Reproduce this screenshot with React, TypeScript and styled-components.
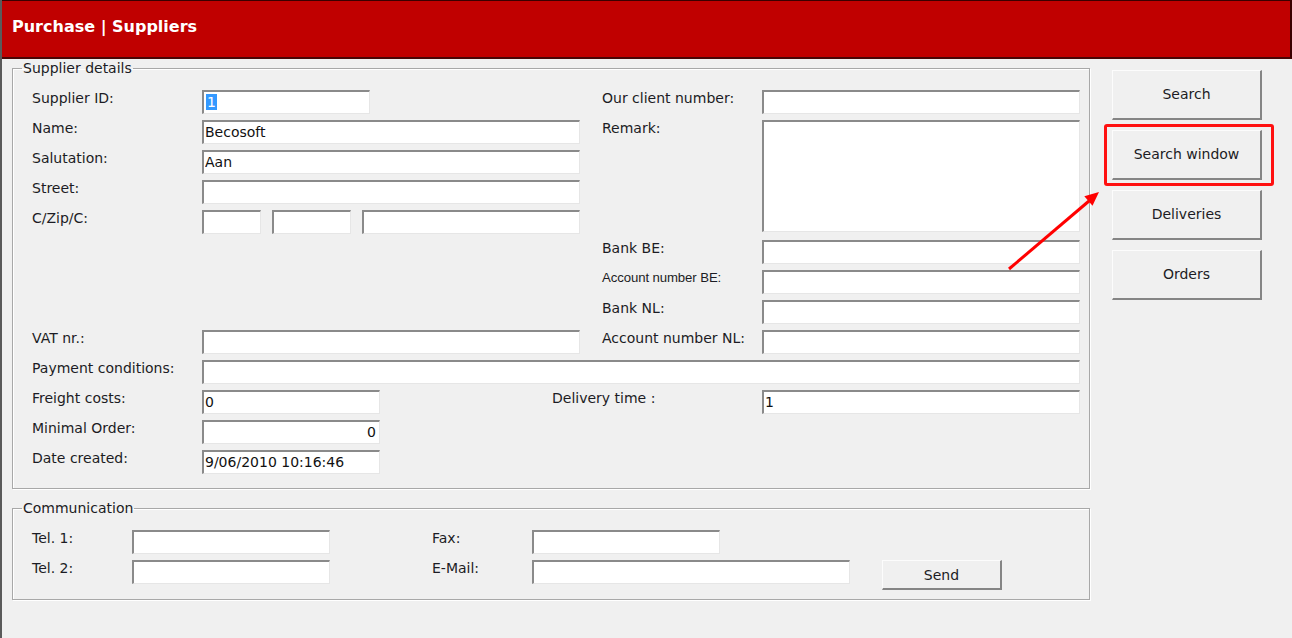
import React from "react";
import styled, { createGlobalStyle, css } from "styled-components";

const Global = createGlobalStyle`
  html, body { margin: 0; padding: 0; background: #f0f0f0; }
  body { font-family: "DejaVu Sans", Verdana, sans-serif; font-size: 14px; color: #1c1c24; }
  * { box-sizing: border-box; }
`;

const Page = styled.div`
  position: relative;
  width: 1292px;
  min-height: 638px;
  background: #f0f0f0;
  border-left: 2px solid #5a5a5a;
  overflow: hidden;
`;

const Header = styled.header`
  height: 59px;
  background: #c00000;
  border-top: 1px solid #3a0000;
  border-bottom: 2px solid #4a0606;
  border-right: 2px solid #3a0000;
  display: flex;
  align-items: center;
  padding: 0 0 6px 10px;
`;

const Title = styled.h1`
  margin: 0;
  font-family: "DejaVu Sans", Verdana, sans-serif;
  font-weight: bold;
  font-size: 16px;
  color: #fff;
`;

const Body = styled.div`
  display: flex;
  align-items: flex-start;
  padding-top: 1px;
`;

const Main = styled.div`
  padding-left: 10px;
  display: flex;
  flex-direction: column;
  gap: 11px;
`;

const Group = styled.fieldset<{ $pb: number }>`
  margin: 0;
  width: 1078px;
  border: 1px solid #a8a8a8;
  box-shadow: inset 1px 1px 0 #fff, 1px 1px 0 #fff;
  padding: 14px 9px ${(p) => p.$pb}px 19px;
  min-inline-size: 0;
`;

const Legend = styled.legend`
  margin-left: -10px;
  padding: 0 1px;
  line-height: 16px;
  font-size: 14px;
  color: #1c1c24;
`;

const DetailsGrid = styled.div`
  display: grid;
  grid-template-columns: 170px 350px 28px 22px 160px 318px;
  grid-auto-rows: 24px;
  row-gap: 6px;
`;

const CommGrid = styled.div`
  display: grid;
  grid-template-columns: 100px 198px 102px 100px 318px 32px 120px 78px;
  grid-template-rows: 24px 30px;
  row-gap: 6px;
`;

const Label = styled.label<{ $col: string; $row: string; $small?: boolean }>`
  grid-column: ${(p) => p.$col};
  grid-row: ${(p) => p.$row};
  align-self: start;
  line-height: 16px;
  font-size: 14px;
  white-space: nowrap;
  color: #1c1c24;
  ${(p) =>
    p.$small &&
    css`
      font-family: "Liberation Sans Narrow", "Liberation Sans", Arial, sans-serif;
      font-size: 13.2px;
      letter-spacing: -0.1px;
    `}
`;

const sunken = css`
  border-style: solid;
  border-width: 2px 1px 1px 2px;
  border-color: #8a8a8a #e6e6e6 #e6e6e6 #8a8a8a;
  background: #fff;
  font-family: "DejaVu Sans", Verdana, sans-serif;
  font-size: 14px;
  color: #111;
  outline: none;
`;

const Input = styled.input<{ $col: string; $row: string; $w?: number; $right?: boolean }>`
  ${sunken};
  grid-column: ${(p) => p.$col};
  grid-row: ${(p) => p.$row};
  align-self: start;
  height: 24px;
  width: ${(p) => (p.$w ? `${p.$w}px` : "100%")};
  padding: 0 3px 1px 1px;
  text-align: ${(p) => (p.$right ? "right" : "left")};
`;

const Area = styled.textarea<{ $col: string; $row: string }>`
  ${sunken};
  grid-column: ${(p) => p.$col};
  grid-row: ${(p) => p.$row};
  resize: none;
  width: 100%;
  height: 112px;
  align-self: start;
`;

const SelectedField = styled.div<{ $col: string; $row: string; $w: number }>`
  ${sunken};
  grid-column: ${(p) => p.$col};
  grid-row: ${(p) => p.$row};
  width: ${(p) => p.$w}px;
  height: 24px;
  padding: 1px 0 0 2px;
  line-height: 18px;
`;

const Selection = styled.span`
  background: #3399ff;
  color: #fff;
  padding: 0 1px;
`;

const ZipRow = styled.div<{ $col: string; $row: string }>`
  grid-column: ${(p) => p.$col};
  grid-row: ${(p) => p.$row};
  display: flex;
  gap: 11px;
`;

const ZipBox = styled.input<{ $w: number }>`
  ${sunken};
  width: ${(p) => p.$w}px;
  height: 24px;
  padding: 0 2px;
`;

const Side = styled.div`
  margin-left: 22px;
  padding-top: 10px;
  display: flex;
  flex-direction: column;
  gap: 10px;
`;

const raised = css`
  border-style: solid;
  border-width: 1px 2px 2px 1px;
  border-color: #fcfcfc #858585 #858585 #fcfcfc;
  background: #f0f0f0;
  font-family: "DejaVu Sans", Verdana, sans-serif;
  font-size: 14px;
  color: #1c1c24;
  padding: 0;
  cursor: pointer;
`;

const SideButton = styled.button`
  ${raised};
  width: 150px;
  height: 50px;
  padding-bottom: 2px;
`;

const Highlighted = styled.div`
  position: relative;
  width: 150px;
  height: 50px;
`;

const HighlightBox = styled.div`
  position: absolute;
  left: -8px;
  right: -12px;
  top: -6px;
  bottom: -6px;
  border: 3px solid #ff1010;
  border-radius: 3px;
  pointer-events: none;
`;

const SendButton = styled.button<{ $col: string; $row: string }>`
  ${raised};
  grid-column: ${(p) => p.$col};
  grid-row: ${(p) => p.$row};
  width: 120px;
  height: 30px;
`;

const Annotation = styled.svg`
  position: absolute;
  left: -2px;
  top: 0;
  pointer-events: none;
`;

export default function App() {
  return (
    <>
      <Global />
      <Page>
        <Header>
          <Title>Purchase | Suppliers</Title>
        </Header>
        <Body>
          <Main>
            <Group $pb={14}>
              <Legend>Supplier details</Legend>
              <DetailsGrid>
                <Label $col="1" $row="1">Supplier ID:</Label>
                <SelectedField $col="2 / 4" $row="1" $w={168}>
                  <Selection>1</Selection>
                </SelectedField>
                <Label $col="5" $row="1">Our client number:</Label>
                <Input $col="6" $row="1" readOnly value="" />

                <Label $col="1" $row="2">Name:</Label>
                <Input $col="2 / 4" $row="2" readOnly value="Becosoft" />
                <Label $col="5" $row="2">Remark:</Label>
                <Area $col="6" $row="2 / 6" readOnly value="" />

                <Label $col="1" $row="3">Salutation:</Label>
                <Input $col="2 / 4" $row="3" readOnly value="Aan" />

                <Label $col="1" $row="4">Street:</Label>
                <Input $col="2 / 4" $row="4" readOnly value="" />

                <Label $col="1" $row="5">C/Zip/C:</Label>
                <ZipRow $col="2 / 4" $row="5">
                  <ZipBox $w={59} readOnly value="" />
                  <ZipBox $w={79} readOnly value="" />
                  <ZipBox $w={218} readOnly value="" />
                </ZipRow>

                <Label $col="5" $row="6">Bank BE:</Label>
                <Input $col="6" $row="6" readOnly value="" />

                <Label $col="5" $row="7" $small>Account number BE:</Label>
                <Input $col="6" $row="7" readOnly value="" />

                <Label $col="5" $row="8">Bank NL:</Label>
                <Input $col="6" $row="8" readOnly value="" />

                <Label $col="1" $row="9">VAT nr.:</Label>
                <Input $col="2 / 4" $row="9" readOnly value="" />
                <Label $col="5" $row="9">Account number NL:</Label>
                <Input $col="6" $row="9" readOnly value="" />

                <Label $col="1" $row="10">Payment conditions:</Label>
                <Input $col="2 / 7" $row="10" readOnly value="" />

                <Label $col="1" $row="11">Freight costs:</Label>
                <Input $col="2" $row="11" $w={178} readOnly value="0" />
                <Label $col="3 / 6" $row="11">Delivery time :</Label>
                <Input $col="6" $row="11" readOnly value="1" />

                <Label $col="1" $row="12">Minimal Order:</Label>
                <Input $col="2" $row="12" $w={178} $right readOnly value="0" />

                <Label $col="1" $row="13">Date created:</Label>
                <Input $col="2" $row="13" $w={178} readOnly value="9/06/2010 10:16:46" />
              </DetailsGrid>
            </Group>

            <Group $pb={9}>
              <Legend>Communication</Legend>
              <CommGrid>
                <Label $col="1" $row="1">Tel. 1:</Label>
                <Input $col="2" $row="1" readOnly value="" />
                <Label $col="4" $row="1">Fax:</Label>
                <Input $col="5" $row="1" $w={188} readOnly value="" />

                <Label $col="1" $row="2">Tel. 2:</Label>
                <Input $col="2" $row="2" readOnly value="" />
                <Label $col="4" $row="2">E-Mail:</Label>
                <Input $col="5" $row="2" readOnly value="" />
                <SendButton $col="7" $row="2">Send</SendButton>
              </CommGrid>
            </Group>
          </Main>

          <Side>
            <SideButton>Search</SideButton>
            <Highlighted>
              <SideButton>Search window</SideButton>
              <HighlightBox />
            </Highlighted>
            <SideButton>Deliveries</SideButton>
            <SideButton>Orders</SideButton>
          </Side>
        </Body>

        <Annotation width="1292" height="638" viewBox="0 0 1292 638">
          <line x1="1009" y1="269" x2="1089" y2="201" stroke="#ff0000" strokeWidth="3" />
          <polygon points="1099,192 1092.5,205.8 1084.3,196.3" fill="#ff0000" />
        </Annotation>
      </Page>
    </>
  );
}
